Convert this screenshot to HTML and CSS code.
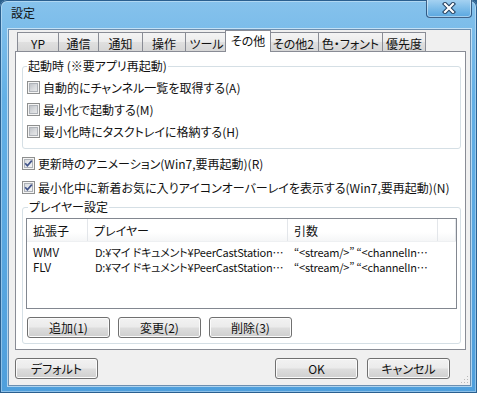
FILE: index.html
```html
<!DOCTYPE html>
<html lang="ja">
<head>
<meta charset="utf-8">
<title>設定</title>
<link rel="stylesheet" href="styles.css">
</head>
<body>
<div class="window">
  <div class="titlebar">
    <span class="title">設定</span>
    <div class="close">
      <svg width="14" height="12" viewBox="0 0 14 12">
        <path d="M3 2 L11 10 M11 2 L3 10" stroke="#233f5e" stroke-width="4.2" stroke-linecap="square" fill="none"/>
        <path d="M3 2 L11 10 M11 2 L3 10" stroke="#ffffff" stroke-width="2.2" stroke-linecap="square" fill="none"/>
      </svg>
    </div>
  </div>
  <div class="client">
    <div class="tabs">
      <div class="tab w42">YP</div>
      <div class="tab w41">通信</div>
      <div class="tab w45">通知</div>
      <div class="tab w44">操作</div>
      <div class="tab w43">ツール</div>
      <div class="tab sel">その他</div>
      <div class="tab w51">その他2</div>
      <div class="tab w65">色・フォント</div>
      <div class="tab w44">優先度</div>
    </div>
    <div class="panel">
      <fieldset class="group g1">
        <legend>起動時 (※要アプリ再起動)</legend>
        <label class="check"><span class="cb"></span><span>自動的にチャンネル一覧を取得する(A)</span></label>
        <label class="check"><span class="cb"></span><span>最小化で起動する(M)</span></label>
        <label class="check"><span class="cb"></span><span>最小化時にタスクトレイに格納する(H)</span></label>
      </fieldset>
      <div class="outer-checks">
        <label class="check tall"><span class="cb on"><svg width="13" height="13" viewBox="0 0 13 13"><path d="M3.2 6.3 L5.4 8.8 L9.8 3.6" stroke="#41538a" stroke-width="1.7" fill="none"/></svg></span><span>更新時のアニメーション(Win7,要再起動)(R)</span></label>
        <label class="check tall"><span class="cb on"><svg width="13" height="13" viewBox="0 0 13 13"><path d="M3.2 6.3 L5.4 8.8 L9.8 3.6" stroke="#41538a" stroke-width="1.7" fill="none"/></svg></span><span>最小化中に新着お気に入りアイコンオーバーレイを表示する(Win7,要再起動)(N)</span></label>
      </div>
      <fieldset class="group g2">
        <legend>プレイヤー設定</legend>
        <div class="list">
          <div class="lhead">
            <div class="col c1">拡張子</div>
            <div class="col c2">プレイヤー</div>
            <div class="col c3">引数</div>
            <div class="col c4"></div>
          </div>
          <div class="rows">
            <div class="row"><div class="col c1">WMV</div><div class="col c2">D:¥マイ&nbsp;ドキュメント¥PeerCastStation…</div><div class="col c3">“&lt;stream/&gt;” “&lt;channelIn…</div></div>
            <div class="row"><div class="col c1">FLV</div><div class="col c2">D:¥マイ&nbsp;ドキュメント¥PeerCastStation…</div><div class="col c3">“&lt;stream/&gt;” “&lt;channelIn…</div></div>
          </div>
        </div>
        <div class="btns">
          <button class="btn">追加(1)</button>
          <button class="btn">変更(2)</button>
          <button class="btn">削除(3)</button>
        </div>
      </fieldset>
    </div>
    <div class="footer">
      <button class="btn">デフォルト</button>
      <span class="spacer"></span>
      <button class="btn">OK</button>
      <button class="btn">キャンセル</button>
    </div>
    <svg class="grip" width="8" height="8" viewBox="0 0 8 8">
      <g fill="#b9b9b9">
        <rect x="6" y="0" width="1" height="1"/>
        <rect x="3" y="3" width="1" height="1"/><rect x="6" y="3" width="1" height="1"/>
        <rect x="0" y="6" width="1" height="1"/><rect x="3" y="6" width="1" height="1"/><rect x="6" y="6" width="1" height="1"/>
      </g>
    </svg>
  </div>
</div>
</body>
</html>
```

FILE: styles.css
```css
* { box-sizing: border-box; }
html, body { margin: 0; padding: 0; }
body {
  width: 477px;
  height: 393px;
  overflow: hidden;
  background: #2b5f8c;
  font-family: "Noto Sans CJK JP", "Noto Sans", sans-serif;
  font-size: 12px;
  color: #111;
  font-feature-settings: "palt";
}
.window {
  width: 477px;
  height: 393px;
  border-radius: 7px 7px 0 0;
  background: linear-gradient(180deg, #86c2ec 0%, #63b0e6 25%, #4f9fdc 100%);
  box-shadow: inset 0 0 0 1px #2a5f8f, inset 0 0 0 2px rgba(255,255,255,0.35);
  display: flex;
  flex-direction: column;
}
.titlebar {
  height: 29px;
  display: flex;
  align-items: flex-start;
  justify-content: space-between;
}
.title {
  margin: 6px 0 0 11px;
  line-height: 14px;
  font-size: 12px;
}
.close {
  width: 46px;
  height: 19px;
  margin: -1px 5px 0 0;
  border: 1px solid rgba(30, 60, 100, 0.75);
  border-top: none;
  border-radius: 0 0 4px 4px;
  background: linear-gradient(180deg, #a9d4f2 0%, #7fbde9 50%, #5aa7e0 100%);
  box-shadow: inset 0 0 0 1px rgba(255,255,255,0.45);
  display: flex;
  align-items: center;
  justify-content: center;
}
.client {
  position: relative;
  margin: 0 6px 0 8px;
  height: 357px;
  background: #f0f0f0;
  border: 1px solid #6d8fb0;
  box-shadow: 0 0 0 1px rgba(255,255,255,0.55);
  display: flex;
  flex-direction: column;
}
.tabs {
  height: 21px;
  display: flex;
  align-items: flex-end;
  padding-left: 8px;
  position: relative;
  z-index: 1;
}
.tab {
  height: 19px;
  border: 1px solid #898c95;
  border-bottom: none;
  margin-left: -1px;
  background: linear-gradient(180deg, #f4f4f4 0%, #ececec 50%, #e0e0e0 51%, #d6d6d6 100%);
  text-align: center;
  line-height: 16px;
  padding-top: 3px;
  white-space: nowrap;
}
.tab:first-child { margin-left: 0; }
.w41 { width: 41px; }
.w42 { width: 42px; }
.w43 { width: 43px; }
.w44 { width: 44px; }
.w45 { width: 45px; }
.w51 { width: 51px; }
.w65 { width: 65px; }
.tab.sel {
  width: 46px;
  height: 22px;
  margin: 0 -2px -1px -3px;
  background: #fff;
  padding-top: 2px;
  position: relative;
  z-index: 2;
}
.tab.sel + .tab { margin-left: -1px; }
.panel {
  height: 299px;
  margin: 0 4px 0 6px;
  border: 1px solid #898c95;
  background: #fff;
  padding: 7px 4px 0 6px;
  display: flex;
  flex-direction: column;
}
.group {
  margin: 0;
  min-width: 0;
  border: 1px solid #d5dfe5;
  border-radius: 3px;
}
.group legend {
  line-height: 14px;
  padding: 0 1px;
  font-size: 12px;
}
.g1 {
  height: 90px;
  padding: 3px 4px 6px 4px;
}
.g2 {
  height: 144px;
  margin-top: 1px;
  padding: 4px 3px 5px 3px;
}
.g2 legend { margin-left: 2px; }
.check {
  display: flex;
  align-items: center;
  height: 22px;
  white-space: nowrap;
}
.check.tall { height: 24px; }
.outer-checks {
  margin-top: 2px;
}
.cb {
  width: 13px;
  height: 13px;
  flex: none;
  margin-right: 3px;
  border: 1px solid #8e8f8f;
  background: linear-gradient(135deg, #b4b8be 0%, #d9dbde 55%, #eeeeef 100%);
  box-shadow: inset 0 0 0 1px #f4f4f4, inset 0 0 0 2px #aeb2b8;
  position: relative;
}
.cb.on {
  background: linear-gradient(135deg, #d0d3d8 0%, #eceef0 60%, #f6f6f7 100%);
}
.cb svg { position: absolute; left: -1px; top: -1px; }
.list {
  height: 91px;
  border: 1px solid #828790;
  background: #fff;
  flex: none;
}
.lhead {
  height: 23px;
  display: flex;
  background: linear-gradient(180deg, #ffffff 0%, #ffffff 60%, #f5f6f7 100%);
  border-bottom: 1px solid #eef0f2;
}
.lhead .col {
  border-right: 1px solid #e3e6ea;
  line-height: 22px;
  padding-top: 1px;
  overflow: hidden;
}
.col {
  white-space: nowrap;
  padding-left: 6px;
  flex: none;
}
.c1 { width: 61px; }
.c2 { width: 200px; }
.c3 { width: 150px; }
.c4 { width: 18px; }
.rows { padding-top: 3px; }
.row {
  display: flex;
  height: 15px;
  line-height: 15px;
  font-size: 11px;
}
.row .c1 { width: 61px; font-size: 11.5px; }
.row .c2 { width: 200px; padding-left: 7px; letter-spacing: -0.2px; }
.row .c3 { width: 150px; letter-spacing: -0.2px; }
.btns {
  display: flex;
  margin-top: 8px;
  padding-left: 1px;
  gap: 8px;
}
.btn {
  width: 83px;
  height: 21px;
  padding: 0;
  font-family: inherit;
  font-size: 12px;
  font-feature-settings: "palt";
  color: #111;
  border: 1px solid #707070;
  border-radius: 3px;
  background: linear-gradient(180deg, #f2f2f2 0%, #ebebeb 48%, #dddddd 52%, #cfcfcf 100%);
  box-shadow: inset 0 0 0 1px #fbfbfb;
  line-height: 17px;
}
.footer {
  display: flex;
  margin-top: 8px;
  padding: 0 20px 0 6px;
}
.spacer { flex: 1; }
.footer .btn + .btn { margin-left: 9px; }
.grip {
  position: absolute;
  right: 1px;
  bottom: 1px;
}
```
